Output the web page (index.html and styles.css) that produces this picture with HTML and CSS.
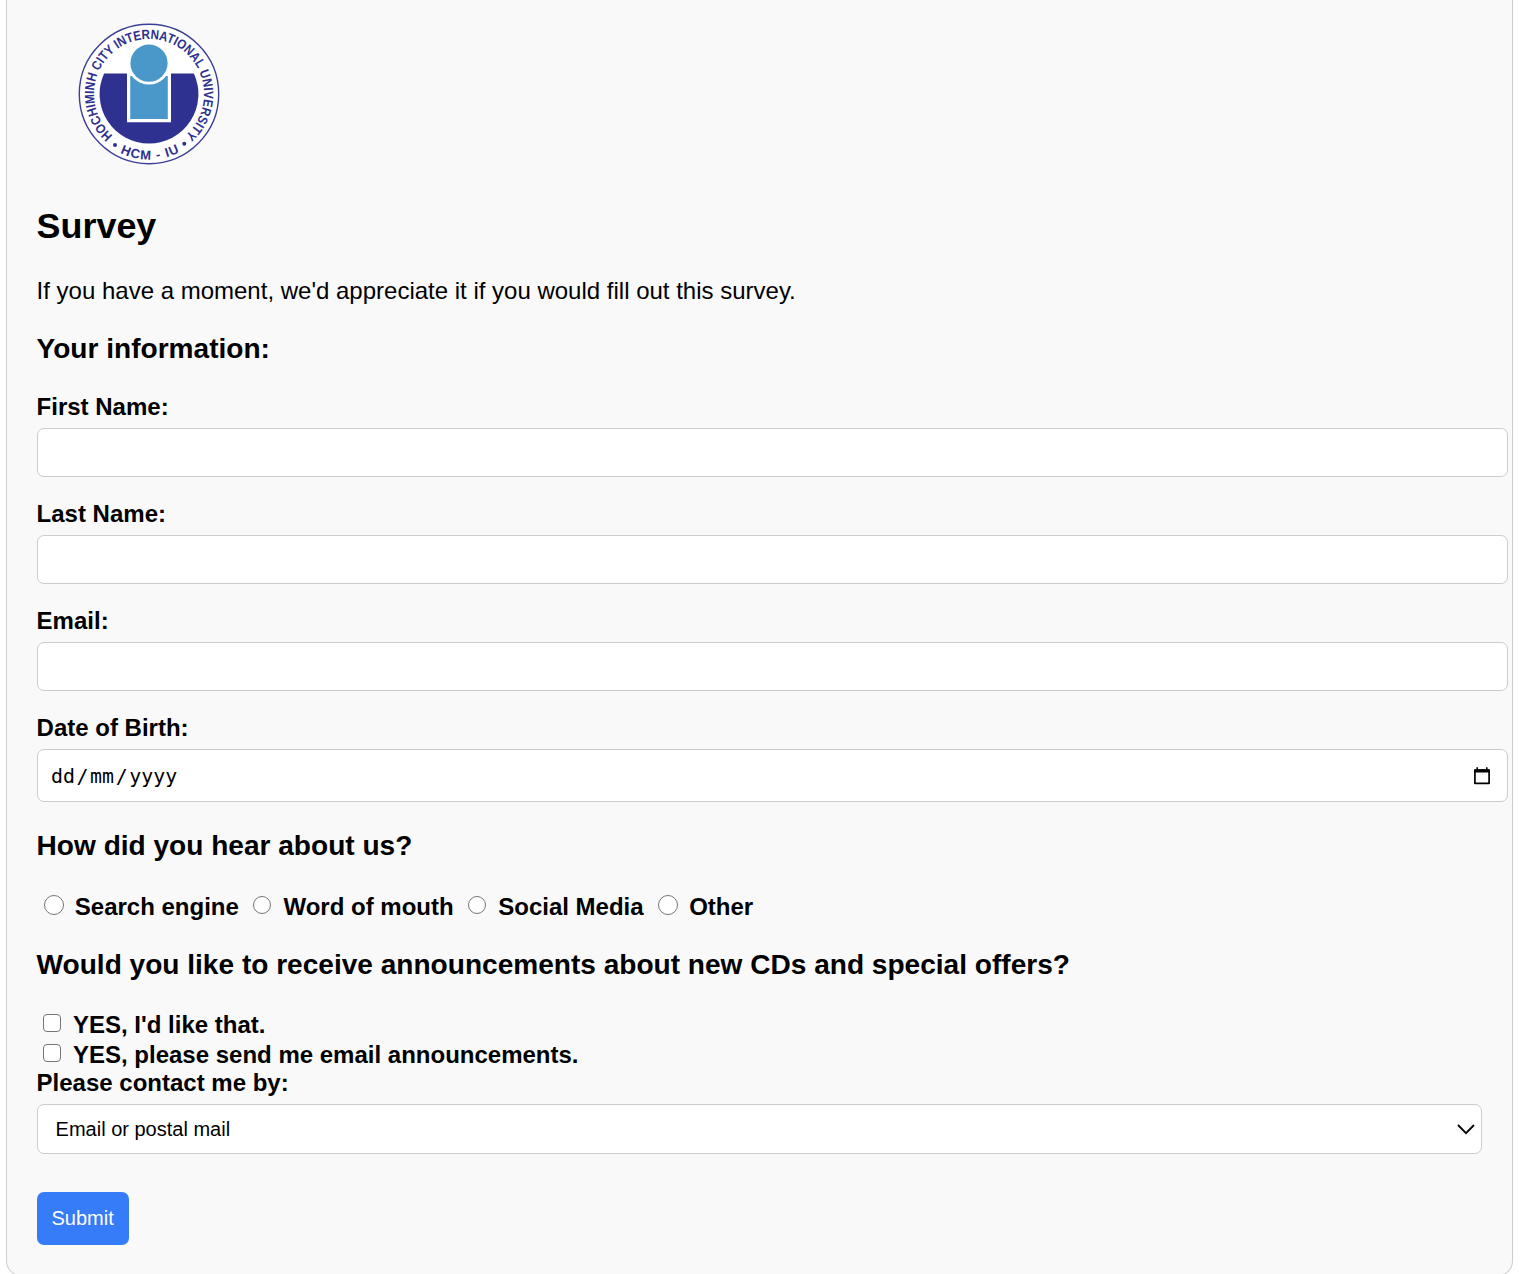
FILE: index.html
```html
<!DOCTYPE html>
<html lang="en">
<head>
<meta charset="utf-8">
<title>Survey</title>
<link rel="stylesheet" href="styles.css">
</head>
<body>
<form class="card">
  <svg class="logo" viewBox="-71 -71 142 142" role="img" aria-label="University logo">
    <defs>
      <path id="arc-top" d="M-36.1 41.5A55 55 0 1 1 36.1 41.5"/>
      <path id="arc-bottom" d="M-30.3 58.1A65.5 65.5 0 0 0 31.1 57.7"/>
    </defs>
    <circle r="69.7" fill="#fff" stroke="#3b3e99" stroke-width="1.4"/>
    <path d="M-44.9 -20.5A49.4 49.4 0 1 0 44.9 -20.5Z" fill="#2e3190"/>
    <path d="M-22 -21H22V28.2H-22Z" fill="#fff"/>
    <path d="M-18.8 -18H18.8V25H-18.8Z" fill="#4a98c9"/>
    <circle cy="-30.8" r="21.4" fill="#fff"/>
    <circle cy="-30.8" r="18.6" fill="#4a98c9"/>
    <text class="logo-text"><textPath href="#arc-top" textLength="266" lengthAdjust="spacingAndGlyphs">HOCHIMINH CITY INTERNATIONAL UNIVERSITY</textPath></text>
    <text class="logo-text logo-text-bottom"><textPath href="#arc-bottom" startOffset="1.6" textLength="61.5" lengthAdjust="spacing">HCM - IU</textPath></text>
    <circle cx="-34" cy="51" r="2" fill="#2e3190"/>
    <circle cx="35.3" cy="49.7" r="2" fill="#2e3190"/>
  </svg>

  <h1 class="title">Survey</h1>
  <p class="intro">If you have a moment, we'd appreciate it if you would fill out this survey.</p>

  <h2 class="heading">Your information:</h2>
  <div class="fields">
    <div class="field"><label class="label" for="first">First Name:</label><input class="input" id="first" type="text"></div>
    <div class="field"><label class="label" for="last">Last Name:</label><input class="input" id="last" type="text"></div>
    <div class="field"><label class="label" for="email">Email:</label><input class="input" id="email" type="email"></div>
    <div class="field">
      <span class="label">Date of Birth:</span>
      <div class="input date">
        <span class="date-text"><span>dd</span><span>/</span><span>mm</span><span>/</span><span>yyyy</span></span>
        <svg class="calendar" viewBox="0 0 16 18"><path d="M.9 3.2H15.1V16.3H.9Z" fill="none" stroke="#000" stroke-width="1.7" stroke-linejoin="round"/><path d="M.6 2.3H15.4V5.5H.6Z M2.4 .2H4V3H2.4Z M12 .2H13.6V3H12Z"/></svg>
      </div>
    </div>
  </div>

  <h2 class="heading">How did you hear about us?</h2>
  <div class="radios">
    <label class="radio-option label"><input class="radio" type="radio" name="source">Search engine</label>
    <label class="radio-option label"><input class="radio radio-small" type="radio" name="source">Word of mouth</label>
    <label class="radio-option label"><input class="radio radio-small" type="radio" name="source">Social Media</label>
    <label class="radio-option label"><input class="radio" type="radio" name="source">Other</label>
  </div>

  <h2 class="heading">Would you like to receive announcements about new CDs and special offers?</h2>
  <div class="checks">
    <label class="check-option label"><input class="check" type="checkbox">YES, I'd like that.</label>
    <label class="check-option label"><input class="check" type="checkbox">YES, please send me email announcements.</label>
  </div>
  <span class="label">Please contact me by:</span>
  <div class="select">
    <span>Email or postal mail</span>
    <svg class="chevron" viewBox="0 0 18 11"><path d="M1 1L9 9.2L17 1" fill="none" stroke="#000" stroke-width="1.8"/></svg>
  </div>
  <button class="submit" type="button">Submit</button>
</form>
</body>
</html>
```
FILE: styles.css
```css
html {
  overflow: hidden;
}

body {
  margin: 0;
  background: #fff;
  color: #000;
  font-family: "Liberation Sans", Arial, sans-serif;
  font-size: 24px;
  line-height: 28px;
}

.card {
  box-sizing: border-box;
  width: 1507px;
  height: 1276px;
  margin-left: 6px;
  padding: 23px 4px 0 29.6px;
  border: 1px solid #ccc;
  border-top: 0;
  border-radius: 0 0 15px 15px;
  background: #f9f9f9;
}

.logo {
  display: block;
  width: 142px;
  height: 142px;
  margin-left: 41.4px;
}

.logo-text {
  fill: #2e3190;
  font-size: 13.4px;
  font-weight: bold;
}

.logo-text-bottom {
  font-size: 13px;
}

.title {
  margin: 40px 0 30px;
  font-size: 35.9px;
  line-height: 42px;
}

.intro {
  margin: 0;
}

.heading {
  margin: 27px 0 27px;
  font-size: 28.07px;
  line-height: 34px;
}

.fields {
  display: flex;
  flex-direction: column;
  gap: 23px;
}

.field {
  display: flex;
  flex-direction: column;
  gap: 7px;
}

.label {
  display: block;
  font-weight: bold;
}

.input {
  box-sizing: border-box;
  width: 1471px;
  height: 49px;
  margin: 0;
  padding: 0 13px;
  border: 1px solid #ccc;
  border-radius: 7px;
  background: #fff;
}

.date {
  display: flex;
  align-items: center;
  justify-content: space-between;
  height: 53px;
  padding-right: 17px;
}

.date-text {
  display: flex;
  gap: 1.6px;
  padding: 2px 0 0 0.4px;
  font-family: "DejaVu Sans Mono", monospace;
  font-size: 19.9px;
}

.calendar {
  width: 16px;
  height: 18px;
}

.radios {
  display: flex;
  gap: 14.6px;
  margin: 30px 0 26px 7.2px;
}

.radio-option,
.check-option {
  display: flex;
}

.radio,
.check {
  box-sizing: border-box;
  flex: none;
  appearance: none;
  border: 1px solid #767676;
  background: #fff;
}

.radio {
  width: 20px;
  height: 20px;
  margin: 2px 11px 0 0;
  border-radius: 50%;
}

.radio-small {
  width: 18px;
  height: 18px;
  margin: 3px 12px 0 0;
}

.checks {
  display: flex;
  flex-direction: column;
  gap: 2px;
  margin: 29px 0 0 6.4px;
}

.check {
  width: 18px;
  height: 18px;
  margin: 3px 12px 0 0;
  border-radius: 4px;
}

.select {
  box-sizing: border-box;
  display: flex;
  align-items: center;
  justify-content: space-between;
  width: 1445px;
  height: 50px;
  margin-top: 7px;
  padding: 0 6px 0 18px;
  border: 1px solid #ccc;
  border-radius: 7px;
  background: #fff;
  font-size: 20px;
}

.chevron {
  width: 18px;
  height: 11px;
}

.submit {
  display: block;
  width: 92px;
  height: 53px;
  margin-top: 38px;
  padding: 0;
  border: 0;
  border-radius: 7px;
  background: #367bf8;
  color: #fff;
  font-family: inherit;
  font-size: 20px;
}
```
